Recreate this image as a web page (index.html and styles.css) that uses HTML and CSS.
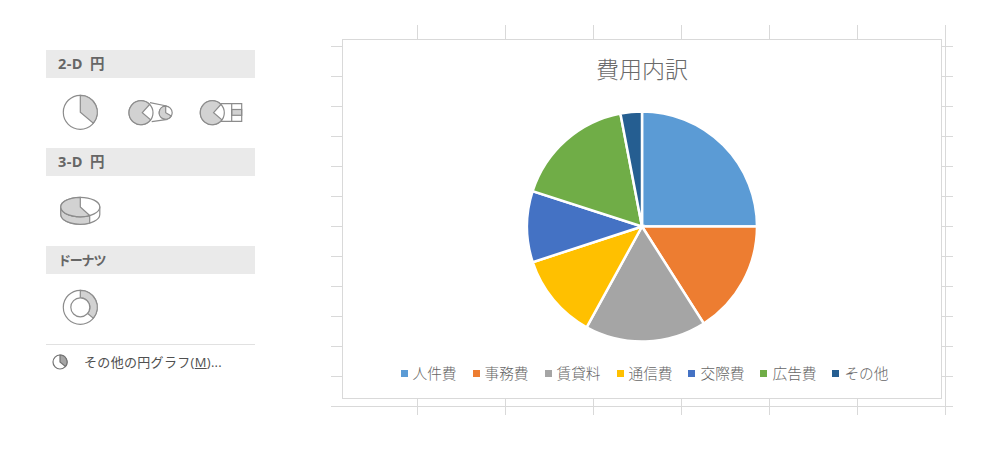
FILE: index.html
```html
<!DOCTYPE html>
<html lang="ja">
<head>
	<meta charset="UTF-8" />
	<title>費用内訳</title>
	<link rel="stylesheet" href="styles.css">
</head>
<body>
<div id="menu">
	<h4>2-D 円</h4>
	<div class="icons">
		<svg class="icon" width="46" height="46" viewBox="0 0 46 46">
			<circle cx="23.3" cy="22.3" r="17" class="blank"/>
			<path d="M23.3 22.3V5.3A17 17 0 0 1 36.3 33.2Z" class="fill"/>
		</svg>
		<svg class="icon" width="46" height="46" viewBox="0 0 46 46">
			<path d="M22 12.7L38.7 16M23.7 31.7L39.7 29.3" class="blank"/>
			<circle cx="13" cy="22.7" r="12" class="blank"/>
			<path d="M14.3 22.7L21.6 14.4A12 12 0 1 0 22.6 29.9Z" class="fill"/>
			<circle cx="37.7" cy="22.7" r="6.5" class="blank"/>
			<path d="M37.7 22.7V16.2A6.5 6.5 0 1 0 43.3 25.9Z" class="fill"/>
		</svg>
		<svg class="icon" width="46" height="46" viewBox="0 0 46 46">
			<rect x="32.7" y="19.5" width="10" height="5.8" class="fill"/>
			<path d="M21.5 13.7H42.7V31.3H22M32.7 13.7V31.3" class="line"/>
			<circle cx="13.3" cy="22.7" r="12" class="blank"/>
			<path d="M14.6 22.7L21.9 14.4A12 12 0 1 0 22.9 29.9Z" class="fill"/>
		</svg>
	</div>
	<h4>3-D 円</h4>
	<div class="icons">
		<svg class="icon" width="46" height="46" viewBox="0 0 46 46">
			<path d="M3.8 19V26.5A19.5 9.7 0 0 0 42.8 26.5V19Z" class="blank"/>
			<path d="M3.8 19V26.5A19.5 9.7 0 0 0 32.7 35V27.5A19.5 9.7 0 0 1 3.8 19Z" class="fill"/>
			<ellipse cx="23.3" cy="19" rx="19.5" ry="9.7" class="blank"/>
			<path d="M23.3 19V9.3A19.5 9.7 0 1 0 32.7 27.5Z" class="fill"/>
		</svg>
	</div>
	<h4 class="kana">ドーナツ</h4>
	<div class="icons">
		<svg class="icon" width="46" height="46" viewBox="0 0 46 46">
			<circle cx="23.3" cy="21.3" r="17" class="blank"/>
			<path d="M23.3 4.3A17 17 0 0 1 36.3 32.2L30.6 27.4A9.5 9.5 0 0 0 23.3 11.8Z" class="fill"/>
			<circle cx="23.3" cy="21.3" r="9.5" class="blank"/>
		</svg>
	</div>
	<div class="more">
		<svg width="16" height="16" viewBox="0 0 16 16">
			<circle cx="8" cy="8" r="7" class="blank dark"/>
			<path d="M8 8V1A7 7 0 0 1 13.4 12.5Z" class="fill dark"/>
		</svg>
		<span>その他の円グラフ(<u>M</u>)...</span>
	</div>
</div>

<div id="sheet">
	<div id="chart">
		<h2>費用内訳</h2>
		<svg class="pie" width="236" height="237" viewBox="0 0 236 237">
			<path d="M118 118.5V3.5A115 115 0 0 1 233 118.5Z" fill="#5B9BD5"/>
			<path d="M118 118.5H233A115 115 0 0 1 179.8 215.5Z" fill="#ED7D31"/>
			<path d="M118 118.5L179.8 215.5A115 115 0 0 1 62.6 219.3Z" fill="#A5A5A5"/>
			<path d="M118 118.5L62.6 219.3A115 115 0 0 1 8.7 154.2Z" fill="#FFC000"/>
			<path d="M118 118.5L8.7 154.2A115 115 0 0 1 8.6 83.1Z" fill="#4472C4"/>
			<path d="M118 118.5L8.6 83.1A115 115 0 0 1 96.4 5.5Z" fill="#70AD47"/>
			<path d="M118 118.5L96.4 5.5A115 115 0 0 1 118 3.5Z" fill="#255E91"/>
		</svg>
		<div class="legend">
			<span class="key"><i class="c1"></i>人件費</span>
			<span class="key"><i class="c2"></i>事務費</span>
			<span class="key"><i class="c3"></i>賃貸料</span>
			<span class="key"><i class="c4"></i>通信費</span>
			<span class="key"><i class="c5"></i>交際費</span>
			<span class="key"><i class="c6"></i>広告費</span>
			<span class="key"><i class="c7"></i>その他</span>
		</div>
	</div>
</div>
</body>
</html>
```

FILE: styles.css
```css
* {
	padding: 0;
	margin: 0;
	box-sizing: border-box;
}
html, body {
	width: 100%;
	height: 100%;
	overflow: hidden;
	background: #FFF;
}
body {
	display: flex;
	align-items: flex-start;
	font-family: "Open Sans", "Noto Sans CJK JP", sans-serif;
	color: #595959;
}

/* left gallery */
#menu {
	width: 209px;
	margin: 50px 0 0 46px;
}
#menu h4 {
	height: 28px;
	line-height: 28px;
	padding-left: 12px;
	background: #EAEAEA;
	font-size: 14.5px;
	font-weight: 700;
	letter-spacing: 0.4px;
	word-spacing: 3px;
	color: #666;
}
#menu h4.kana {
	font-size: 13px;
	letter-spacing: -1.2px;
}
.icons {
	display: flex;
	align-items: center;
	gap: 25px;
	height: 70px;
	padding-left: 11px;
}
.blank {
	fill: #FFF;
	stroke: #8C8C8C;
	stroke-width: 1.2;
}
.fill {
	fill: #D2D2D2;
	stroke: #8C8C8C;
	stroke-width: 1.2;
}
.line {
	fill: none;
	stroke: #8C8C8C;
	stroke-width: 1.2;
}
.blank.dark {
	stroke: #737373;
}
.fill.dark {
	fill: #A6A6A6;
	stroke: #737373;
}
.more {
	display: flex;
	align-items: center;
	height: 34px;
	padding-left: 6px;
	border-top: 1px solid #E1E1E1;
	font-size: 13px;
	color: #505050;
}
.more svg {
	margin-right: 16px;
}
.more span {
	letter-spacing: 0.32px;
}

/* worksheet behind the chart */
#sheet {
	width: 622px;
	height: 390px;
	margin: 25px 0 0 76px;
	padding: 14px 0 0 11px;
	background-image:
		linear-gradient(to right, #D9D9D9 1px, transparent 1px),
		linear-gradient(to bottom, #D9D9D9 1px, transparent 1px);
	background-size: 88px 100%, 100% 30px;
	background-position: 86px 0, 0 21px;
}
#chart {
	display: flex;
	flex-direction: column;
	align-items: center;
	width: 600px;
	height: 360px;
	padding-top: 14px;
	background: #FFF;
	border: 1px solid #D9D9D9;
}
#chart h2 {
	height: 30px;
	line-height: 30px;
	font-size: 23px;
	font-weight: 300;
	color: #6A6A6A;
}
.pie {
	margin-top: 24px;
}
.pie path {
	stroke: #FFF;
	stroke-width: 2.5;
}
.legend {
	display: flex;
	gap: 16px;
	margin-top: 18px;
	padding-left: 5px;
	font-size: 14.67px;
	font-weight: 300;
	line-height: 20px;
	color: #666;
}
.key {
	display: flex;
	align-items: center;
	gap: 5px;
}
.key i {
	width: 7px;
	height: 7px;
}
.c1 { background: #5B9BD5; }
.c2 { background: #ED7D31; }
.c3 { background: #A5A5A5; }
.c4 { background: #FFC000; }
.c5 { background: #4472C4; }
.c6 { background: #70AD47; }
.c7 { background: #255E91; }
```
